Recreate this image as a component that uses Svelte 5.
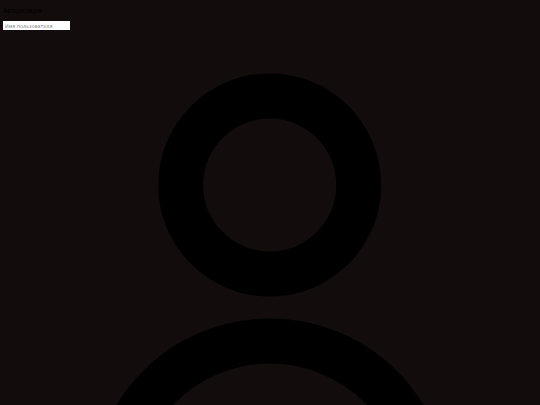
<script>
    let username = $state('');
</script>

<div class="Page">
    <svg class="Avatar" viewBox="0 0 540 405" aria-hidden="true">
        <circle cx="269.7" cy="185" r="89" />
        <circle cx="270" cy="498" r="157" />
    </svg>
    <div class="Login">
        <h1 class="Login__Title">Авторизация</h1>
        <input class="Login__Input" type="text" placeholder="Имя пользователя" bind:value={username} />
    </div>
</div>

<style>
    :global(body) {
        margin: 0;
        background: #130c0d;
    }

    .Page {
        position: relative;
        width: 540px;
        height: 405px;
        overflow: hidden;
        background: #130c0d;
        font-family: "Liberation Sans", Arial, sans-serif;
    }

    .Avatar {
        position: absolute;
        top: 0;
        left: 0;
        width: 540px;
        height: 405px;
    }

    .Avatar circle {
        fill: none;
        stroke: #000;
        stroke-width: 45;
    }

    .Login {
        position: relative;
        padding: 6px 3px;
    }

    .Login__Title {
        margin: 0 0 5px;
        font-size: 6.5px;
        line-height: 10px;
        font-weight: normal;
        color: #000;
    }

    .Login__Input {
        display: block;
        box-sizing: border-box;
        width: 67px;
        height: 9px;
        margin: 0;
        padding: 0 2px;
        border: 0;
        border-radius: 0;
        outline: 0;
        background: #fff;
        font-family: "DejaVu Sans", sans-serif;
        font-size: 4.9px;
        color: #000;
    }

    .Login__Input::placeholder {
        color: #808080;
        opacity: 1;
    }
</style>
